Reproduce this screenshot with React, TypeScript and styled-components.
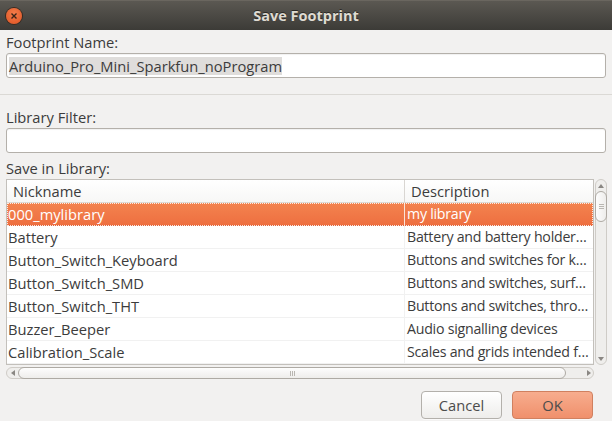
import React from 'react'
import styled, { createGlobalStyle } from 'styled-components'

const GlobalStyle = createGlobalStyle`
  html, body {
    margin: 0;
    padding: 0;
    background: #f2f1f0;
  }
  body {
    font-family: 'Open Sans', 'Liberation Sans', sans-serif;
    font-size: 14.7px;
    color: #3c3c3c;
  }
`

const Window = styled.div`
  width: 612px;
  height: 421px;
  display: flex;
  flex-direction: column;
  background: #f2f1f0;
  overflow: hidden;
`

const TitleBar = styled.div`
  height: 30px;
  flex: none;
  display: grid;
  grid-template-columns: 30px 1fr 30px;
  align-items: center;
  background: linear-gradient(#5b5852, #3c3b37);
  border-top: 1px solid #6a665f;
  box-sizing: border-box;
`

const CloseButton = styled.div`
  width: 16px;
  height: 16px;
  margin-left: 6px;
  margin-top: 1px;
  border-radius: 50%;
  background: radial-gradient(circle at 50% 35%, #f47c4a, #df5322);
  box-shadow: 0 0 0 1px #3a2a20;
  display: flex;
  align-items: center;
  justify-content: center;
`

const Title = styled.div`
  text-align: center;
  font-weight: 700;
  font-size: 14.5px;
  color: #dfdbd2;
  text-shadow: 0 -1px 0 #2a2925;
`

const Section = styled.div<{ pad: string }>`
  display: flex;
  flex-direction: column;
  padding: ${p => p.pad};
`

const Label = styled.div<{ gap?: number }>`
  line-height: 17px;
  margin-bottom: 2px;
  margin-top: ${p => p.gap ?? 0}px;
`

const TextBox = styled.div`
  height: 25px;
  box-sizing: border-box;
  background: #fff;
  border: 1px solid #b4b0aa;
  border-radius: 3px;
  box-shadow: inset 0 1px 1px rgba(0, 0, 0, 0.06);
  display: flex;
  align-items: center;
  padding-left: 2px;
`

const Selected = styled.span`
  background: #dfdddb;
  color: #3c3c3c;
  line-height: 18px;
`

const Divider = styled.div`
  height: 1px;
  background: #dbd9d5;
  flex: none;
`

const ListArea = styled.div`
  display: grid;
  grid-template-columns: 588px 12px;
  grid-template-rows: 186px 12px;
  column-gap: 1px;
  row-gap: 2px;
`

const Table = styled.div`
  border: 1px solid #c3c0bb;
  background: #fff;
  box-sizing: border-box;
  overflow: hidden;
`

const HeaderRow = styled.div`
  display: grid;
  grid-template-columns: 398px 1fr;
  height: 23px;
  box-sizing: border-box;
  border-bottom: 1px solid #dddad6;
  background: linear-gradient(#ffffff, #f7f7f6);
`

const HeaderCell = styled.div<{ first?: boolean }>`
  display: flex;
  align-items: center;
  padding-left: 6px;
  border-right: ${p => (p.first ? '1px solid #d9d6d2' : 'none')};
`

const Row = styled.div<{ selected?: boolean }>`
  display: grid;
  grid-template-columns: 398px 1fr;
  height: 23px;
  box-sizing: border-box;
  border-bottom: 1px solid ${p => (p.selected ? '#e2643a' : '#f1f1f1')};
  background: ${p => (p.selected ? 'linear-gradient(#f3834f, #ee6f40)' : '#fff')};
  color: ${p => (p.selected ? '#fff' : '#3c3c3c')};
  outline: ${p => (p.selected ? '1px dotted rgba(255,255,255,0.85)' : 'none')};
  outline-offset: -1px;
`

const Cell = styled.div<{ first?: boolean; selected?: boolean }>`
  padding-left: ${p => (p.first ? 1 : 2)}px;
  line-height: 22px;
  white-space: nowrap;
  overflow: hidden;
  min-width: 0;
  font-size: ${p => (p.first ? '14.7px' : '14.2px')};
  letter-spacing: ${p => (p.first ? '0' : '-0.25px')};
  border-right: ${p =>
    p.first ? `1px solid ${p.selected ? '#fbe2d6' : '#f1f1f1'}` : 'none'};
`

const VScroll = styled.div`
  display: flex;
  flex-direction: column;
  align-items: center;
  border: 1px solid #cfccc7;
  border-radius: 6px;
  background: #efeeec;
  box-sizing: border-box;
`

const HScroll = styled.div`
  display: flex;
  align-items: center;
  border: 1px solid #cfccc7;
  border-radius: 6px;
  background: #efeeec;
  box-sizing: border-box;
`

const ArrowSlot = styled.div<{ size: number; end?: boolean }>`
  flex: none;
  width: ${p => p.size}px;
  height: ${p => p.size}px;
  display: flex;
  align-items: center;
  justify-content: ${p => (p.end ? 'flex-end' : 'center')};
  padding-right: ${p => (p.end ? 2 : 0)}px;
  box-sizing: border-box;
`

const Spacer = styled.div`
  flex: 1;
`

const Thumb = styled.div<{ vertical?: boolean }>`
  box-sizing: border-box;
  width: ${p => (p.vertical ? '12px' : 'auto')};
  height: ${p => (p.vertical ? '31px' : '12px')};
  flex: ${p => (p.vertical ? 'none' : '1')};
  margin: ${p => (p.vertical ? '0 -1px' : '-1px 0')};
  border: 1px solid #aeaaa4;
  border-radius: 6px;
  background: linear-gradient(${p => (p.vertical ? '90deg, ' : '')}#fdfdfd, #eeedeb);
  display: flex;
  flex-direction: ${p => (p.vertical ? 'column' : 'row')};
  align-items: center;
  justify-content: center;
  gap: 1px;
`

const Grip = styled.span<{ vertical?: boolean }>`
  display: block;
  width: ${p => (p.vertical ? '5px' : '1px')};
  height: ${p => (p.vertical ? '1px' : '5px')};
  background: #b9b6b1;
`

const Footer = styled.div`
  display: flex;
  justify-content: flex-end;
  gap: 10px;
  padding: 12px 19px 0 0;
`

const Button = styled.button<{ primary?: boolean }>`
  width: 81px;
  height: 28px;
  border-radius: 4px;
  font-family: 'Open Sans', 'Liberation Sans', sans-serif;
  font-size: 14.7px;
  color: #4c4c4c;
  border: 1px solid ${p => (p.primary ? '#d0805f' : '#b3b0ab')};
  background: ${p =>
    p.primary
      ? 'linear-gradient(#f7ad8e, #f0906c)'
      : 'linear-gradient(#ffffff, #eeedeb)'};
  box-shadow: 0 1px 0 rgba(255, 255, 255, 0.6);
  padding: 0;
`

const Arrow = ({ dir }: { dir: 'up' | 'down' | 'left' | 'right' }) => {
  const pts = {
    up: '0,4 3,0 6,4',
    down: '0,0 3,4 6,0',
    left: '4,0 0,3 4,6',
    right: '0,0 4,3 0,6',
  }[dir]
  const vert = dir === 'up' || dir === 'down'
  return (
    <svg width={vert ? 6 : 4} height={vert ? 4 : 6} viewBox={vert ? '0 0 6 4' : '0 0 4 6'}>
      <polygon points={pts} fill="#8a8783" />
    </svg>
  )
}

const libraries = [
  { nick: '000_mylibrary', desc: 'my library' },
  { nick: 'Battery', desc: 'Battery and battery holder…' },
  { nick: 'Button_Switch_Keyboard', desc: 'Buttons and switches for k…' },
  { nick: 'Button_Switch_SMD', desc: 'Buttons and switches, surf…' },
  { nick: 'Button_Switch_THT', desc: 'Buttons and switches, thro…' },
  { nick: 'Buzzer_Beeper', desc: 'Audio signalling devices' },
  { nick: 'Calibration_Scale', desc: 'Scales and grids intended f…' },
]

export default function App() {
  return (
    <Window>
      <GlobalStyle />
      <TitleBar>
        <CloseButton>
          <svg width="8" height="8" viewBox="0 0 8 8">
            <path d="M1.5 1.5 L6.5 6.5 M6.5 1.5 L1.5 6.5" stroke="#3b2418" strokeWidth="1.4" />
          </svg>
        </CloseButton>
        <Title>Save Footprint</Title>
        <div />
      </TitleBar>

      <Section pad="4px 6px 16px 6px">
        <Label>Footprint Name:</Label>
        <TextBox>
          <Selected>Arduino_Pro_Mini_Sparkfun_noProgram</Selected>
        </TextBox>
      </Section>
      <Divider />
      <Section pad="14px 6px 0 6px">
        <Label>Library Filter:</Label>
        <TextBox />
        <Label gap={7}>Save in Library:</Label>
        <ListArea>
          <Table>
            <HeaderRow>
              <HeaderCell first>Nickname</HeaderCell>
              <HeaderCell>Description</HeaderCell>
            </HeaderRow>
            {libraries.map((lib, i) => (
              <Row key={lib.nick} selected={i === 0}>
                <Cell first selected={i === 0}>{lib.nick}</Cell>
                <Cell>{lib.desc}</Cell>
              </Row>
            ))}
          </Table>
          <VScroll>
            <ArrowSlot size={11}>
              <Arrow dir="up" />
            </ArrowSlot>
            <Thumb vertical>
              <Grip vertical />
              <Grip vertical />
              <Grip vertical />
            </Thumb>
            <Spacer />
            <ArrowSlot size={11}>
              <Arrow dir="down" />
            </ArrowSlot>
          </VScroll>
          <HScroll>
            <ArrowSlot size={11}>
              <Arrow dir="left" />
            </ArrowSlot>
            <Thumb>
              <Grip />
              <Grip />
              <Grip />
            </Thumb>
            <ArrowSlot size={27} end>
              <Arrow dir="right" />
            </ArrowSlot>
          </HScroll>
        </ListArea>
      </Section>
      <Footer>
        <Button>Cancel</Button>
        <Button primary>OK</Button>
      </Footer>
    </Window>
  )
}
